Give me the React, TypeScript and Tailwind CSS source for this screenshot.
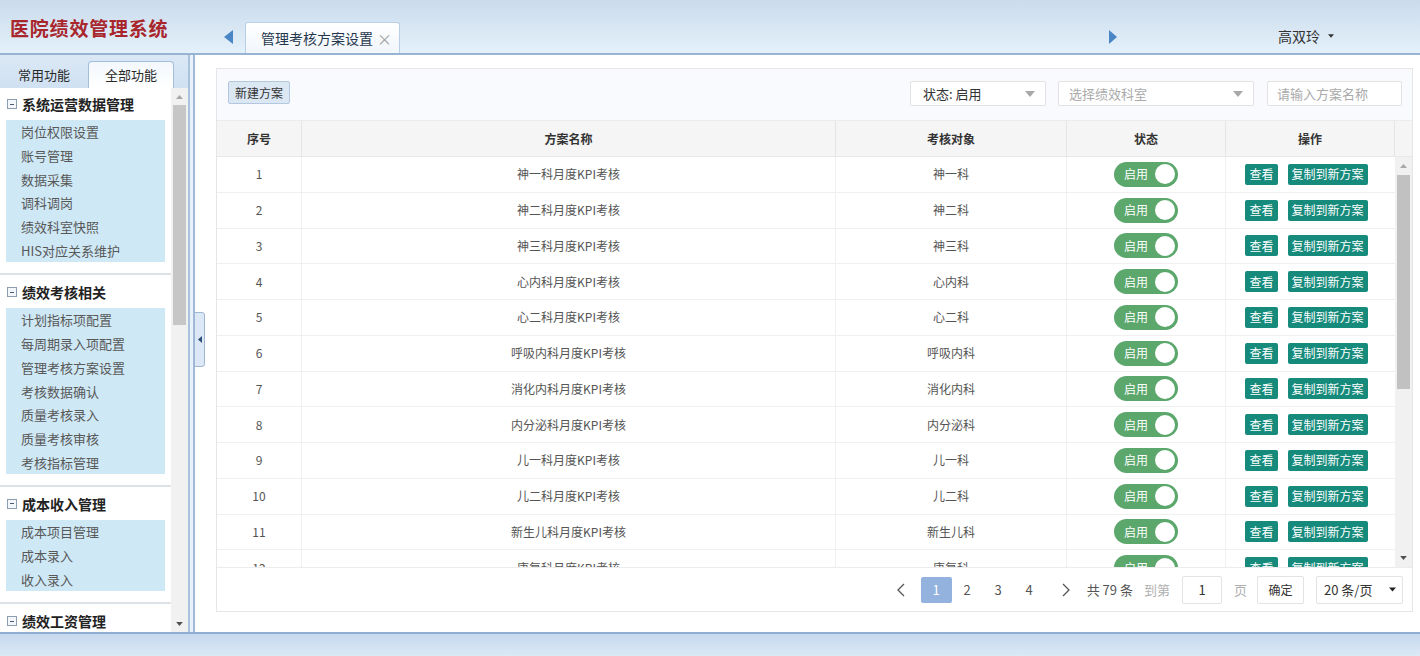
import React from "react";

const rows: [string, string][] = [
  ["神一科月度KPI考核", "神一科"],
  ["神二科月度KPI考核", "神二科"],
  ["神三科月度KPI考核", "神三科"],
  ["心内科月度KPI考核", "心内科"],
  ["心二科月度KPI考核", "心二科"],
  ["呼吸内科月度KPI考核", "呼吸内科"],
  ["消化内科月度KPI考核", "消化内科"],
  ["内分泌科月度KPI考核", "内分泌科"],
  ["儿一科月度KPI考核", "儿一科"],
  ["儿二科月度KPI考核", "儿二科"],
  ["新生儿科月度KPI考核", "新生儿科"],
  ["康复科月度KPI考核", "康复科"],
];

const sections: { title: string; items: string[] }[] = [
  { title: "系统运营数据管理", items: ["岗位权限设置", "账号管理", "数据采集", "调科调岗", "绩效科室快照", "HIS对应关系维护"] },
  { title: "绩效考核相关", items: ["计划指标项配置", "每周期录入项配置", "管理考核方案设置", "考核数据确认", "质量考核录入", "质量考核审核", "考核指标管理"] },
  { title: "成本收入管理", items: ["成本项目管理", "成本录入", "收入录入"] },
  { title: "绩效工资管理", items: [] },
];

function DownTri({ color = "#a8a8a8", w = 10, h = 6 }: { color?: string; w?: number; h?: number }) {
  return (
    <svg width={w} height={h} viewBox="0 0 10 6">
      <polygon points="0,0 10,0 5,6" fill={color} />
    </svg>
  );
}

function Header() {
  return (
    <div className="h-[55px] shrink-0 flex items-end bg-gradient-to-b from-[#cbdbec] to-[#e4f1fb] border-b-2 border-[#98b4d3]">
      <div className="w-[218px] h-full flex items-center pl-[10px] pt-[2px]">
        <span className="text-[19px] font-bold text-[#a8262c] tracking-[0.8px] leading-none">医院绩效管理系统</span>
      </div>
      <div className="mb-[9px] ml-[6px]">
        <svg width="9" height="14" viewBox="0 0 9 14">
          <polygon points="9,0 9,14 0,7" fill="#4a86c6" />
        </svg>
      </div>
      <div className="ml-[12px] w-[155px] h-[31px] bg-gradient-to-b from-[#ffffff] to-[#f1f6fb] border border-b-0 border-[#b9cfe5] rounded-t-[3px] flex items-center pl-[15px]">
        <span className="text-[14px] text-[#25374d] leading-none">管理考核方案设置</span>
        <span className="ml-[4px] text-[15px] text-[#a0a0a0] leading-none">×</span>
      </div>
      <div className="mb-[9px] ml-[709px]">
        <svg width="8" height="14" viewBox="0 0 8 14">
          <polygon points="0,0 0,14 8,7" fill="#4a86c6" />
        </svg>
      </div>
      <div className="mb-[10px] ml-[161px] flex items-center">
        <span className="text-[14px] text-[#333] leading-none">高双玲</span>
        <span className="ml-[8px]">
          <DownTri color="#333" w={6} h={4} />
        </span>
      </div>
    </div>
  );
}

function Sidebar() {
  return (
    <div className="w-[190px] shrink-0 flex flex-col border-r-2 border-[#a9c2dd] bg-white">
      <div className="h-[33px] shrink-0 flex items-end bg-gradient-to-b from-[#dbe8f5] to-[#d0e1f2]">
        <div className="w-[88px] h-[26px] flex items-center justify-center text-[13px] text-[#2a2a2a]">常用功能</div>
        <div className="w-[86px] h-[27px] flex items-center justify-center text-[13px] text-[#2a2a2a] bg-gradient-to-b from-[#f3f8fd] to-[#ffffff] border border-b-0 border-[#a3bedb] rounded-t-[4px]">
          全部功能
        </div>
      </div>
      <div className="flex-1 flex min-h-0">
        <div className="w-[171px] overflow-hidden">
          {sections.map((s, si) => (
            <div key={s.title} className={si > 0 ? "border-t-2 border-[#dde2e8]" : ""}>
              <div className={`h-[26px] flex items-center pl-[7px] ${si === 0 ? "mt-[3px]" : "mt-[4px]"}`}>
                <span className="w-[10px] h-[10px] border border-[#8d9db0] bg-[#f4f7fa] flex items-center justify-center">
                  <span className="w-[4px] h-[1px] bg-[#4b5b70]" />
                </span>
                <span className="ml-[5px] text-[14px] font-bold text-[#222] leading-none">{s.title}</span>
              </div>
              {s.items.length > 0 && (
                <div className="mt-[3px] mb-[11px] ml-[6px] w-[159px] bg-[#cfe8f6]">
                  {s.items.map((it) => (
                    <div key={it} className="h-[23.7px] flex items-center pl-[15px] text-[13px] text-[#585858] leading-none">
                      {it}
                    </div>
                  ))}
                </div>
              )}
            </div>
          ))}
        </div>
        <div className="w-[17px] bg-[#f1f1f1] flex flex-col items-center">
          <div className="h-[17px] flex items-center justify-center">
            <svg width="7" height="4" viewBox="0 0 7 4">
              <polygon points="0,4 7,4 3.5,0" fill="#a8a8a8" />
            </svg>
          </div>
          <div className="w-[13px] h-[220px] bg-[#c6c6c6]" />
          <div className="flex-1" />
          <div className="h-[17px] flex items-center justify-center">
            <DownTri color="#505050" w={7} h={4} />
          </div>
        </div>
      </div>
    </div>
  );
}

const cols = [85, 534, 231, 159, 169];

function Toggle() {
  return (
    <div className="w-[64px] h-[25px] rounded-full bg-[#5ba76c] flex items-center justify-between pl-[10px] pr-[3px]">
      <span className="text-[12px] text-white leading-none">启用</span>
      <span className="w-[20px] h-[20px] rounded-full bg-white" />
    </div>
  );
}

function Table() {
  return (
    <>
      <div className="h-[36px] shrink-0 flex bg-[#f5f5f5] border-b border-[#e8e8e8] text-[12px] font-bold text-[#333]">
        {["序号", "方案名称", "考核对象", "状态", "操作"].map((h, i) => (
          <div key={h} style={{ width: cols[i] }} className="flex items-center justify-center border-r border-[#e4e4e4]">
            {h}
          </div>
        ))}
        <div className="w-[17px]" />
      </div>
      <div className="h-[410px] shrink-0 flex overflow-hidden">
        <div className="w-[1178px] overflow-hidden">
          {rows.map((r, i) => (
            <div key={i} className="h-[35.75px] flex border-b border-[#f0f0f0] text-[12px] text-[#555]">
              <div style={{ width: cols[0] }} className="flex items-center justify-center border-r border-[#f0f0f0]">{i + 1}</div>
              <div style={{ width: cols[1] }} className="flex items-center justify-center border-r border-[#f0f0f0]">{r[0]}</div>
              <div style={{ width: cols[2] }} className="flex items-center justify-center border-r border-[#f0f0f0]">{r[1]}</div>
              <div style={{ width: cols[3] }} className="flex items-center justify-center border-r border-[#f0f0f0]">
                <Toggle />
              </div>
              <div style={{ width: cols[4] }} className="flex items-center justify-center gap-[10px] pr-[8px]">
                <span className="h-[21px] px-[4px] flex items-center bg-[#168a7b] text-white text-[12px] rounded-[2px]">查看</span>
                <span className="h-[21px] px-[4px] flex items-center bg-[#168a7b] text-white text-[12px] rounded-[2px]">复制到新方案</span>
              </div>
            </div>
          ))}
        </div>
        <div className="w-[17px] bg-[#f1f1f1] flex flex-col items-center">
          <div className="h-[18px] flex items-center justify-center">
            <svg width="7" height="4" viewBox="0 0 7 4">
              <polygon points="0,4 7,4 3.5,0" fill="#a8a8a8" />
            </svg>
          </div>
          <div className="w-[13px] h-[214px] bg-[#c1c1c1]" />
          <div className="flex-1" />
          <div className="h-[18px] flex items-center justify-center">
            <DownTri color="#505050" w={7} h={4} />
          </div>
        </div>
      </div>
    </>
  );
}

function Pager() {
  return (
    <div className="h-[44px] shrink-0 flex items-center justify-end pr-[9px] border-t border-[#ececec] text-[13px] text-[#555]">
      <span className="w-[20px] flex justify-center">
        <svg width="8" height="14" viewBox="0 0 8 14">
          <polyline points="7,1 1,7 7,13" fill="none" stroke="#555" strokeWidth="1.3" />
        </svg>
      </span>
      <span className="ml-[10px] w-[31px] h-[26px] rounded-[2px] bg-[#93b2dd] text-white flex items-center justify-center">1</span>
      <span className="w-[31px] flex justify-center">2</span>
      <span className="w-[31px] flex justify-center">3</span>
      <span className="w-[31px] flex justify-center">4</span>
      <span className="ml-[11px] w-[20px] flex justify-center">
        <svg width="8" height="14" viewBox="0 0 8 14">
          <polyline points="1,1 7,7 1,13" fill="none" stroke="#555" strokeWidth="1.3" />
        </svg>
      </span>
      <span className="ml-[11px]">共 79 条</span>
      <span className="ml-[11px] text-[#b0b0b0]">到第</span>
      <span className="ml-[12px] w-[40px] h-[28px] border border-[#e3e3e3] rounded-[2px] flex items-center justify-center text-[#333]">1</span>
      <span className="ml-[12px] text-[#b0b0b0]">页</span>
      <span className="ml-[10px] w-[47px] h-[28px] border border-[#e3e3e3] rounded-[2px] flex items-center justify-center text-[12px] text-[#333]">确定</span>
      <span className="ml-[12px] w-[87px] h-[28px] border border-[#e3e3e3] rounded-[2px] flex items-center justify-between pl-[7px] pr-[6px] text-[#333]">
        20 条/页
        <DownTri color="#222" w={7} h={7} />
      </span>
    </div>
  );
}

function Content() {
  return (
    <div className="flex-1 relative bg-white pl-[21px] pt-[13px] pr-[7px] pb-[20px]">
      <div className="absolute left-[-1px] top-[257px] w-[11px] h-[55px] bg-[#dce8f5] border border-[#9fb7d2] rounded-r-[3px] flex items-center justify-center">
        <svg width="4" height="7" viewBox="0 0 4 7">
          <polygon points="4,0 4,7 0,3.5" fill="#2e4e78" />
        </svg>
      </div>
      <div className="h-full border border-[#e6e6e6] flex flex-col">
        <div className="h-[52px] shrink-0 flex items-start bg-[#f8fafd] border-b border-[#ececec] pt-[12px]">
          <div className="ml-[11px] w-[62px] h-[23px] bg-[#dce7f4] border border-[#b3c8e0] rounded-[2px] flex items-center justify-center text-[12px] text-[#333]">
            新建方案
          </div>
          <div className="flex-1" />
          <div className="w-[136px] h-[25px] bg-white border border-[#e3e3e3] rounded-[2px] flex items-center justify-between pl-[12px] pr-[10px]">
            <span className="text-[13px] text-[#333]">状态: 启用</span>
            <DownTri />
          </div>
          <div className="ml-[12px] w-[196px] h-[25px] bg-white border border-[#e3e3e3] rounded-[2px] flex items-center justify-between pl-[10px] pr-[10px]">
            <span className="text-[13px] text-[#aaa]">选择绩效科室</span>
            <DownTri />
          </div>
          <div className="ml-[13px] mr-[10px] w-[135px] h-[25px] bg-white border border-[#e3e3e3] rounded-[2px] flex items-center pl-[9px]">
            <span className="text-[13px] text-[#aaa]">请输入方案名称</span>
          </div>
        </div>
        <Table />
        <Pager />
      </div>
    </div>
  );
}

export default function App() {
  return (
    <div className="w-[1420px] h-[656px] overflow-hidden flex flex-col bg-white font-['Noto_Sans_CJK_SC','Microsoft_YaHei',sans-serif]">
      <Header />
      <div className="flex-1 flex min-h-0">
        <Sidebar />
        <div className="w-[5px] shrink-0 bg-[#e9f1f9] border-r-2 border-[#9fbad8]" />
        <Content />
      </div>
      <div className="h-[24px] shrink-0 border-t-2 border-[#8eadd0] bg-gradient-to-b from-[#c5d8ee] to-[#dce9f6]" />
    </div>
  );
}
